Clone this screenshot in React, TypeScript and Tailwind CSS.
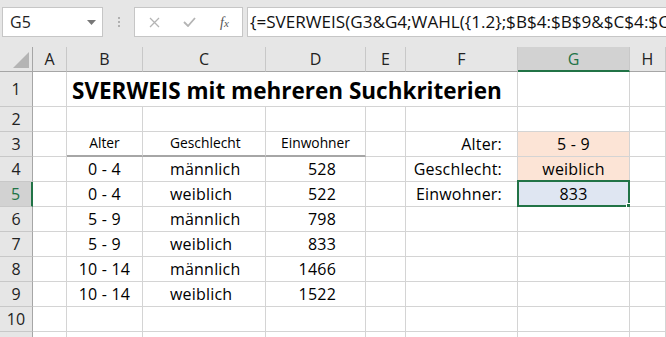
import { ReactNode } from "react";

// Spreadsheet look-alike: formula bar on top, grid of cells below
const FONT = { fontFamily: "'Open Sans', 'Noto Sans', sans-serif" };

const GRID = "grid grid-cols-[33px_34px_76px_123px_100px_40px_112px_112px_1fr]";

const colLetters = ["A", "B", "C", "D", "E", "F", "G", "H"];

interface Row {
  n: number;
  h: string;
  cells: ReactNode;
}

function Cell({
  children,
  className = "",
  bg = "bg-white",
  size = "text-[16px] tracking-[0.2px]",
  thick = false,
}: {
  children?: ReactNode;
  className?: string;
  bg?: string;
  size?: string;
  thick?: boolean;
}) {
  return (
    <div
      className={`relative flex min-h-0 items-end border-r border-r-[#d4d4d4] leading-[18px] text-black whitespace-nowrap ${
        thick ? "border-b-2 border-b-[#a6a6a6]" : "border-b border-b-[#d4d4d4]"
      } ${bg} ${size} ${className}`}
    >
      {children}
    </div>
  );
}

function RowHeader({ n, active }: { n: number; active?: boolean }) {
  return (
    <div
      className={`flex items-center justify-center border-b border-b-[#c8c8c8] text-[16px] leading-[18px] ${
        active
          ? "bg-[#d2d2d2] text-[#217346] border-r-2 border-r-[#217346]"
          : "bg-[#e6e6e6] text-[#222] border-r border-r-[#a6a6a6]"
      }`}
    >
      {n}
    </div>
  );
}

function dataRow(n: number, age: string, sex: string, pop: string, extra?: ReactNode): Row {
  return {
    n,
    h: "grid-rows-[25px]",
    cells: (
      <>
        <Cell />
        <Cell className="justify-center pb-[3px]">{age}</Cell>
        <Cell className="pl-[27px] pb-[3px]">{sex}</Cell>
        <Cell className="justify-end pr-[29px] pb-[3px]">{pop}</Cell>
        <Cell />
        {extra ?? (
          <>
            <Cell />
            <Cell />
          </>
        )}
        <Cell />
      </>
    ),
  };
}

function emptyRow(n: number): Row {
  return {
    n,
    h: "grid-rows-[25px]",
    cells: (
      <>
        {Array.from({ length: 8 }).map((_, i) => (
          <Cell key={i} />
        ))}
      </>
    ),
  };
}

function FormulaBar() {
  return (
    <div className="flex h-[47px] items-start bg-[#e6e6e6] pt-[7px] pl-[2px]">
      <div className="flex h-[30px] w-[101px] items-center justify-between border border-[#c6c6c6] bg-white pl-[7px] pr-[6px] text-[16px] text-[#222]">
        <span>G5</span>
        <svg width="9" height="5" viewBox="0 0 9 5">
          <path d="M0 0h9L4.5 5z" fill="#777" />
        </svg>
      </div>
      <div className="flex h-[30px] w-[31px] flex-col items-center justify-center gap-[2px]">
        <span className="h-[2px] w-[2px] bg-[#b0b0b0]" />
        <span className="h-[2px] w-[2px] bg-[#b0b0b0]" />
        <span className="h-[2px] w-[2px] bg-[#b0b0b0]" />
      </div>
      <div className="flex h-[30px] w-[109px] items-center border border-[#c6c6c6] bg-white">
        <svg className="ml-[14px]" width="11" height="11" viewBox="0 0 11 11">
          <path d="M1 1l9 9M10 1l-9 9" stroke="#b4b4b4" strokeWidth="1.3" />
        </svg>
        <svg className="ml-[23px]" width="13" height="10" viewBox="0 0 13 10">
          <path d="M1 5l4 4 7-8" stroke="#b4b4b4" strokeWidth="1.8" fill="none" />
        </svg>
        <span
          className="ml-[24px] text-[14px] italic text-[#555]"
          style={{ fontFamily: "'Liberation Serif', serif" }}
        >
          f<span className="text-[11px]">x</span>
        </span>
      </div>
      <div className="ml-[4px] flex h-[30px] flex-1 items-center overflow-hidden border-y border-l border-[#c6c6c6] bg-white pl-[2px] text-[17.1px] whitespace-nowrap text-[#111]">
        {"{=SVERWEIS(G3&G4;WAHL({1.2};$B$4:$B$9&$C$4:$C$9;$D$4:$D$9);2;0)}"}
      </div>
    </div>
  );
}

const small = "text-[13.8px]";

export default function App() {
  const rows: Row[] = [
    {
      n: 1,
      h: "grid-rows-[35px]",
      cells: (
        <>
          <Cell />
          <Cell size="text-[22.5px]" className="col-span-5 pb-[6px] pl-[5px] font-bold">
            SVERWEIS mit mehreren Suchkriterien
          </Cell>
          <Cell />
          <Cell />
        </>
      ),
    },
    emptyRow(2),
    {
      n: 3,
      h: "grid-rows-[25px]",
      cells: (
        <>
          <Cell />
          <Cell thick size={small} className="justify-center pb-[3px]">Alter</Cell>
          <Cell thick size={small} className="pl-[27px] pb-[3px]">Geschlecht</Cell>
          <Cell thick size={small} className="justify-center pb-[3px]">Einwohner</Cell>
          <Cell />
          <Cell className="justify-end pr-[15px] pb-[3px]">Alter:</Cell>
          <Cell bg="bg-[#fce4d6]" className="justify-center pb-[3px]">5 - 9</Cell>
          <Cell />
        </>
      ),
    },
    dataRow(
      4,
      "0 - 4",
      "männlich",
      "528",
      <>
        <Cell className="justify-end pr-[15px] pb-[3px]">Geschlecht:</Cell>
        <Cell bg="bg-[#fce4d6]" className="justify-center pb-[3px]">weiblich</Cell>
      </>
    ),
    dataRow(
      5,
      "0 - 4",
      "weiblich",
      "522",
      <>
        <Cell className="justify-end pr-[15px] pb-[3px]">Einwohner:</Cell>
        <Cell bg="bg-[#dfe6f2]" className="justify-center pb-[3px]">
          833
          {/* selection frame + fill handle */}
          <div className="absolute -top-[2px] -left-[1px] -right-[1px] -bottom-[1px] border-2 border-[#217346]" />
          <div className="absolute -right-[3px] -bottom-[3px] h-[6px] w-[6px] border border-white bg-[#217346]" />
        </Cell>
      </>
    ),
    dataRow(6, "5 - 9", "männlich", "798"),
    dataRow(7, "5 - 9", "weiblich", "833"),
    dataRow(8, "10 - 14", "männlich", "1466"),
    dataRow(9, "10 - 14", "weiblich", "1522"),
    emptyRow(10),
    emptyRow(11),
  ];

  return (
    <div className="h-[337px] w-[666px] overflow-hidden bg-white" style={FONT}>
      <FormulaBar />
      {/* column headers */}
      <div className={`${GRID} grid-rows-[25px]`}>
        <div className="relative border-r border-r-[#a6a6a6] border-b border-b-[#a6a6a6] bg-[#e6e6e6]">
          <svg className="absolute right-[3px] bottom-[3px]" width="16" height="16" viewBox="0 0 16 16">
            <path d="M16 0v16H0z" fill="#b4b4b4" />
          </svg>
        </div>
        {colLetters.map((c) =>
          c === "G" ? (
            <div
              key={c}
              className="flex items-center justify-center border-r border-r-[#c8c8c8] border-b-2 border-b-[#217346] bg-[#d2d2d2] text-[16px] leading-[18px] text-[#217346]"
            >
              {c}
            </div>
          ) : (
            <div
              key={c}
              className="flex items-center justify-center border-r border-r-[#c8c8c8] border-b border-b-[#a6a6a6] bg-[#e6e6e6] text-[16px] leading-[18px] text-[#222]"
            >
              {c}
            </div>
          )
        )}
      </div>
      {rows.map((r) => (
        <div key={r.n} className={`${GRID} ${r.h}`}>
          <RowHeader n={r.n} active={r.n === 5} />
          {r.cells}
        </div>
      ))}
    </div>
  );
}
